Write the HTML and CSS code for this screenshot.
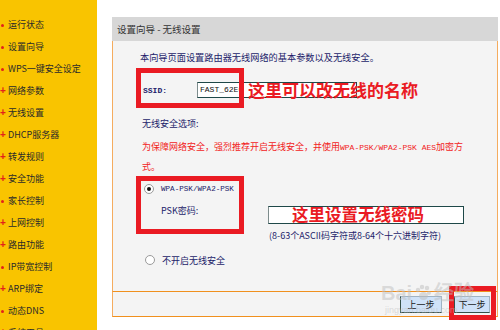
FILE: index.html
```html
<!DOCTYPE html>
<html lang="zh-CN">
<head>
  <meta charset="UTF-8">
  <title>设置向导 - 无线设置</title>
  <link rel="stylesheet" href="styles.css">
</head>
<body>
<div class="page">

  <ul class="menu">
    <li class="dot">运行状态</li>
    <li class="dot">设置向导</li>
    <li class="dot">WPS一键安全设定</li>
    <li class="plus">网络参数</li>
    <li class="plus">无线设置</li>
    <li class="plus">DHCP服务器</li>
    <li class="plus">转发规则</li>
    <li class="plus">安全功能</li>
    <li class="dot">家长控制</li>
    <li class="plus">上网控制</li>
    <li class="plus">路由功能</li>
    <li class="dot">IP带宽控制</li>
    <li class="plus">ARP绑定</li>
    <li class="dot">动态DNS</li>
    <li class="plus">系统工具</li>
  </ul>

  <div class="main">
    <div class="panel">
      <div class="panel-title">设置向导 - 无线设置</div>

      <div class="panel-body">
        <p class="intro">本向导页面设置路由器无线网络的基本参数以及无线安全。</p>

        <div class="ssid-row">
          <span class="ssid-label">SSID:</span>
          <span class="field ssid-field">FAST_62E0</span>
        </div>

        <p class="section">无线安全选项:</p>
        <p class="warn">为保障网络安全，强烈推荐开启无线安全，并使用<span class="mono">WPA-PSK/WPA2-PSK AES</span>加密方<br>式。</p>

        <div class="option">
          <span class="radio checked"></span>
          <span class="option-text mono">WPA-PSK/WPA2-PSK</span>
        </div>

        <div class="psk-row">
          <span class="psk-label">PSK密码:</span>
          <span class="field psk-field"></span>
        </div>
        <p class="hint">(8-63个ASCII码字符或8-64个十六进制字符)</p>

        <div class="option option-off">
          <span class="radio"></span>
          <span class="option-text">不开启无线安全</span>
        </div>
      </div>

      <div class="panel-foot">
        <button class="btn btn-prev">上一步</button>
        <button class="btn btn-next">下一步</button>
      </div>
    </div>
  </div>

  <!-- annotations drawn over the screenshot -->
  <div class="mark mark-ssid"></div>
  <div class="mark mark-psk"></div>
  <div class="mark mark-next"></div>
  <div class="note note-ssid">这里可以改无线的名称</div>
  <div class="note note-psk">这里设置无线密码</div>

  <div class="watermark">
    <span class="wm-logo">Bai<svg class="paw" width="18" height="18" viewBox="0 0 18 18"><circle cx="4" cy="6" r="2.2"/><circle cx="8" cy="3" r="2.2"/><circle cx="13" cy="4" r="2.2"/><circle cx="15" cy="9" r="2"/><ellipse cx="9.5" cy="12" rx="4.5" ry="4"/></svg>经验</span>
    <span class="wm-url">jingyan.baidu.com</span>
  </div>

</div>
</body>
</html>
```

FILE: styles.css
```css
body {
  margin: 0;
  background-color: #fff;
  font-family: "Noto Sans CJK SC", "Liberation Sans", sans-serif;
  font-size: 9px;
  color: #1c1c6a;
}
p {
  margin: 0;
}
.mono {
  font-family: "Liberation Mono", "Noto Sans CJK SC", monospace;
  font-size: 8px;
}

.page {
  position: relative;
  display: flex;
  width: 500px;
  height: 330px;
  overflow: hidden;
}

/* left menu */
.menu {
  list-style: none;
  margin: 0;
  padding: 14px 0 0 0;
  width: 97px;
  flex-shrink: 0;
  background-color: #f9c400;
  font-size: 9px;
  color: #2a2a2a;
}
.menu li {
  position: relative;
  height: 22px;
  line-height: 22px;
  padding-left: 8px;
  white-space: nowrap;
}
.menu li.plus::before {
  content: "+";
  position: absolute;
  left: 0;
  top: 0;
  color: #e3201b;
  font-family: "Liberation Sans", sans-serif;
  font-weight: bold;
  font-size: 10px;
}
.menu li.dot::before {
  content: "";
  position: absolute;
  left: 1px;
  top: 10px;
  width: 3px;
  height: 3px;
  border-radius: 50%;
  background-color: #e3201b;
}

/* main panel */
.main {
  padding: 17px 0 0 15px;
}
.panel {
  width: 386px;
}
.panel-title {
  height: 24px;
  line-height: 24px;
  padding-left: 5px;
  background-color: #d7d7d7;
  color: #333;
  font-size: 9.5px;
}
.panel-body {
  height: 251px;
  box-sizing: border-box;
  padding: 10px 0 0 27px;
  background-color: #f4f4f4;
  border-left: 1px solid #f5ac5e;
  border-right: 1px solid #f5ac5e;
  border-bottom: 1px solid #f0901e;
}
.intro {
  line-height: 12px;
  font-size: 9.2px;
}

.ssid-row {
  display: flex;
  align-items: center;
  height: 16px;
  margin-top: 19px;
}
.ssid-label {
  width: 54px;
  padding-left: 3px;
  font-family: "Liberation Mono", monospace;
  font-size: 8px;
  font-weight: bold;
  color: #1c1c6a;
}
.field {
  display: block;
  box-sizing: border-box;
  background-color: #fff;
  border: 1px solid #1f4848;
  border-left-color: #7d8c8c;
}
.ssid-field {
  width: 160px;
  height: 16px;
  line-height: 14px;
  padding-left: 2px;
  font-family: "Liberation Mono", monospace;
  font-size: 8px;
  color: #111;
}

.section {
  margin-top: 20px;
  padding-left: 2px;
  line-height: 12px;
}
.warn {
  margin-top: 7px;
  padding-left: 2px;
  line-height: 19px;
  color: #f2221c;
  white-space: nowrap;
}

.option {
  display: flex;
  align-items: center;
  height: 12px;
  margin-top: 7px;
  padding-left: 4px;
}
.option-off {
  margin-top: 12px;
  padding-left: 5px;
}
.radio {
  width: 8px;
  height: 8px;
  border: 1px solid #9a9a9a;
  border-radius: 50%;
  background-color: #fff;
  position: relative;
}
.radio.checked::after {
  content: "";
  position: absolute;
  left: 2px;
  top: 2px;
  width: 4px;
  height: 4px;
  border-radius: 50%;
  background-color: #111;
}
.option-text {
  margin-left: 7px;
}
.option-text.mono {
  font-size: 7.6px;
}

.psk-row {
  display: flex;
  align-items: flex-start;
  margin-top: 10px;
  padding-left: 21px;
}
.psk-label {
  width: 107px;
  line-height: 12px;
}
.psk-field {
  width: 196px;
  height: 18px;
  margin-top: 1px;
}
.hint {
  margin-top: 6px;
  padding-left: 129px;
  line-height: 12px;
  font-size: 9px;
}

.panel-foot {
  display: flex;
  justify-content: flex-end;
  align-items: flex-start;
  gap: 12px;
  height: 25px;
  padding: 4px 7px 0 0;
  box-sizing: border-box;
  background-color: #f4f4f4;
  border-left: 1px solid #f5ac5e;
  border-right: 1px solid #f5ac5e;
  border-bottom: 1px solid #f0901e;
}
.btn {
  height: 17px;
  padding: 0;
  background-color: #cfe2f8;
  border: 1px solid #35504a;
  border-top-color: #9fb3c4;
  border-right-color: #9fb3c4;
  font-family: "Noto Sans CJK SC", sans-serif;
  font-size: 9px;
  color: #1a1a1a;
}
.btn-prev {
  width: 42px;
}
.btn-next {
  width: 36px;
}

/* red annotation boxes and notes */
.mark {
  position: absolute;
  border: 5px solid #ea1b23;
  box-sizing: border-box;
}
.mark-ssid {
  left: 136px;
  top: 68px;
  width: 108px;
  height: 40px;
}
.mark-psk {
  left: 136px;
  top: 176px;
  width: 108px;
  height: 58px;
}
.mark-next {
  left: 449px;
  top: 286px;
  width: 47px;
  height: 34px;
}
.note {
  position: absolute;
  font-weight: bold;
  color: #ea1b23;
  white-space: nowrap;
}
.note-ssid {
  left: 248px;
  top: 79px;
  font-size: 17px;
  line-height: 22px;
}
.note-psk {
  left: 292px;
  top: 204px;
  font-size: 16.5px;
  line-height: 21px;
}

/* faint baidu watermark */
.watermark {
  position: absolute;
  left: 381px;
  top: 281px;
  display: flex;
  flex-direction: column;
  color: rgba(190, 190, 190, 0.5);
  pointer-events: none;
}
.wm-logo {
  display: flex;
  align-items: center;
  font-family: "Liberation Sans", sans-serif;
  font-weight: bold;
  font-size: 20px;
  line-height: 24px;
}
.wm-logo .paw {
  fill: rgba(190, 190, 190, 0.5);
  margin: 0 2px;
}
.wm-url {
  font-family: "Liberation Sans", sans-serif;
  font-size: 9px;
  line-height: 10px;
  padding-left: 4px;
}
```
